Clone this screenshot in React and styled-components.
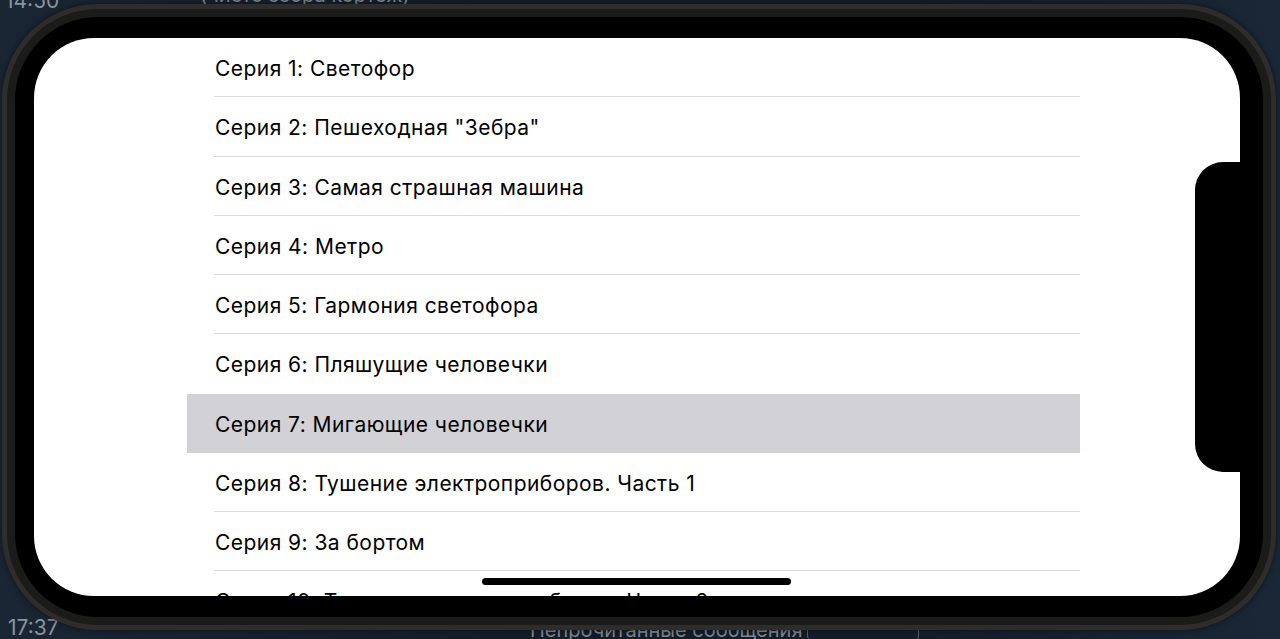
import React from 'react';
import styled, { createGlobalStyle } from 'styled-components';

const episodes = [
    'Серия 1: Светофор',
    'Серия 2: Пешеходная "Зебра"',
    'Серия 3: Самая страшная машина',
    'Серия 4: Метро',
    'Серия 5: Гармония светофора',
    'Серия 6: Пляшущие человечки',
    'Серия 7: Мигающие человечки',
    'Серия 8: Тушение электроприборов. Часть 1',
    'Серия 9: За бортом',
    'Серия 10: Тушение электроприборов. Часть 2',
];

const selectedIndex = 6;

const GlobalStyle = createGlobalStyle`
    html, body {
        margin: 0;
        padding: 0;
        background: #16212d;
        overflow: hidden;
    }
    #root {
        width: 1280px;
        height: 639px;
    }
`;

const Page = styled.div`
    position: relative;
    width: 1280px;
    height: 639px;
    overflow: hidden;
    background: linear-gradient(90deg, #1a2633 0%, #141d27 40%, #141d27 70%, #1a2736 100%);
    font-family: Inter, "Noto Sans", sans-serif;
`;

// chat behind the phone
const Backdrop = styled.div`
    height: 100%;
    display: flex;
    flex-direction: column;
    justify-content: space-between;
`;

const ChatRow = styled.div`
    display: flex;
    align-items: flex-start;
    height: 22px;
    margin-top: ${p => p.$top || 0}px;
    padding-left: ${p => p.$left || 0}px;
`;

const Time = styled.span`
    font-size: 21px;
    line-height: 22px;
    color: #8893a0;
    width: ${p => p.$w}px;
`;

const ChatText = styled.span`
    font-size: 20px;
    line-height: 22px;
    color: #7d8794;
    margin-top: ${p => p.$shift || 0}px;
`;

const UnreadBox = styled.span`
    display: inline-block;
    width: 110px;
    height: 22px;
    margin-left: 4px;
    border: 1px solid #56606b;
    border-radius: 5px;
`;

const Frame = styled.div`
    position: absolute;
    top: 4px;
    left: 2px;
    width: 1274px;
    height: 626px;
    box-sizing: border-box;
    padding: 5px;
    border-radius: 96px;
    background: #2e2d2b;
    box-shadow: 0 0 6px rgba(0, 0, 0, 0.5);
`;

const Bezel = styled.div`
    height: 100%;
    box-sizing: border-box;
    padding: 8px;
    border-radius: 91px;
    background: #1b1b1a;
`;

const Glass = styled.div`
    height: 100%;
    box-sizing: border-box;
    padding: 21px 23px 21px 19px;
    border-radius: 83px;
    background: #000;
`;

const Screen = styled.div`
    position: relative;
    height: 100%;
    border-radius: 60px;
    background: #fff;
    overflow: hidden;
`;

const Notch = styled.div`
    position: absolute;
    right: 0;
    top: 124px;
    width: 45px;
    height: 310px;
    background: #000;
    border-radius: 28px 0 0 28px;
`;

const HomeIndicator = styled.div`
    position: absolute;
    left: 50%;
    bottom: 11px;
    width: 309px;
    height: 7px;
    margin-left: -155px;
    border-radius: 4px;
    background: #000;
`;

const List = styled.ul`
    list-style: none;
    margin: 0 0 0 153px;
    padding: 0;
    width: 893px;
`;

const Row = styled.li`
    position: relative;
    height: 59.25px;
    box-sizing: border-box;
    padding: 2px 0 0 28px;
    display: flex;
    align-items: center;
    font-size: 21px;
    letter-spacing: 0.45px;
    color: #000;
    white-space: nowrap;
    background: ${p => (p.$selected ? '#d1d1d6' : 'transparent')};

    &::after {
        content: '';
        display: ${p => (p.$noLine ? 'none' : 'block')};
        position: absolute;
        left: 27px;
        right: 0;
        bottom: 0;
        height: 1px;
        background: #d9d9dc;
    }
`;

const App = () => {
    return (
        <>
            <GlobalStyle />
            <Page>
                <Backdrop>
                    <ChatRow $top={-10} $left={5}>
                        <Time $w={195}>14:50</Time>
                        <ChatText $shift={-6}>(чисто зебра кортеж)</ChatText>
                    </ChatRow>
                    <ChatRow $top={0} $left={8}>
                        <Time $w={522}>17:37</Time>
                        <ChatText $shift={2}>Непрочитанные сообщения</ChatText>
                        <UnreadBox />
                    </ChatRow>
                </Backdrop>
                <Frame>
                    <Bezel>
                        <Glass>
                            <Screen>
                                <List>
                                    {episodes.map((title, i) => (
                                        <Row
                                            key={title}
                                            $selected={i === selectedIndex}
                                            $noLine={i === selectedIndex || i === selectedIndex - 1}
                                        >
                                            {title}
                                        </Row>
                                    ))}
                                </List>
                                <Notch />
                                <HomeIndicator />
                            </Screen>
                        </Glass>
                    </Bezel>
                </Frame>
            </Page>
        </>
    );
};

export default App;
